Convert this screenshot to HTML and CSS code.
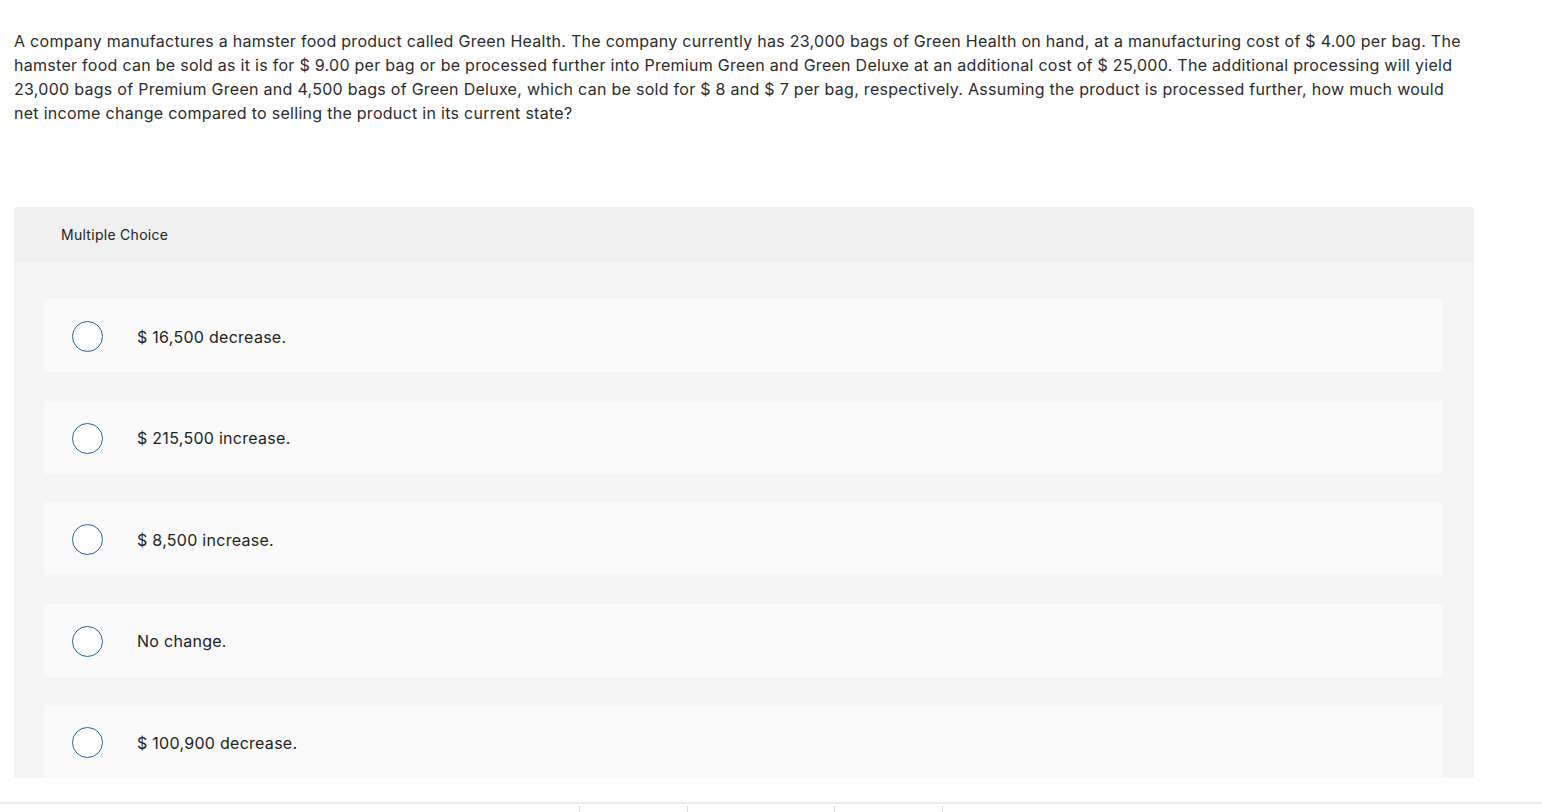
FILE: index.html
```html
<!DOCTYPE html>
<html lang="en">
<head>
<meta charset="utf-8">
<title>Multiple Choice</title>
<link rel="stylesheet" href="styles.css">
</head>
<body>
<div class="page">
  <p class="question">A company manufactures a hamster food product called Green Health. The company currently has 23,000 bags of Green Health on hand, at a manufacturing cost of $ 4.00 per bag. The<br>hamster food can be sold as it is for $ 9.00 per bag or be processed further into Premium Green and Green Deluxe at an additional cost of $ 25,000. The additional processing will yield<br>23,000 bags of Premium Green and 4,500 bags of Green Deluxe, which can be sold for $ 8 and $ 7 per bag, respectively. Assuming the product is processed further, how much would<br>net income change compared to selling the product in its current state?</p>

  <section class="panel">
    <header class="panel-head">Multiple Choice</header>
    <div class="panel-body">
      <label class="option"><span class="radio"></span><span class="opt-text">$ 16,500 decrease.</span></label>
      <label class="option"><span class="radio"></span><span class="opt-text">$ 215,500 increase.</span></label>
      <label class="option"><span class="radio"></span><span class="opt-text">$ 8,500 increase.</span></label>
      <label class="option"><span class="radio"></span><span class="opt-text">No change.</span></label>
      <label class="option"><span class="radio"></span><span class="opt-text">$ 100,900 decrease.</span></label>
    </div>
  </section>
</div>
<footer class="footer">
  <span class="tick t1"></span><span class="tick t2"></span><span class="tick t3"></span><span class="tick t4"></span>
</footer>
</body>
</html>
```

FILE: styles.css
```css
html, body {
  margin: 0;
  padding: 0;
  background: #ffffff;
  height: 812px;
  overflow: hidden;
}
body {
  font-family: "Inter", "Lato", sans-serif;
  color: #2b2b2b;
  letter-spacing: 0.28px;
}
.page {
  padding: 29px 0 0 14px;
  width: 1460px;
  height: 750px;
  overflow: hidden;
}
.question {
  margin: 0;
  font-size: 16px;
  line-height: 24px;
  white-space: nowrap;
}
.panel {
  margin-top: 82px;
  width: 1460px;
  background: #f5f5f5;
  border-radius: 4px 4px 0 0;
}
.panel-head {
  height: 56px;
  background: #f0f0f0;
  border-radius: 4px 4px 0 0;
  display: flex;
  align-items: center;
  padding-left: 47px;
  font-size: 14px;
  color: #222;
  padding-bottom: 1px;
  box-sizing: border-box;
}
.panel-body {
  padding: 36px 31px 0 30px;
  display: flex;
  flex-direction: column;
  gap: 28.5px;
}
.option {
  height: 73px;
  flex: none;
  background: #fafafa;
  border-radius: 3px;
  display: flex;
  align-items: center;
  padding-left: 28px;
}
.radio {
  width: 29px;
  height: 29px;
  border: 1px solid #2d5f91;
  border-radius: 50%;
  background: #fff;
  flex: none;
  margin-top: 2px;
}
.opt-text {
  margin-left: 34px;
  font-size: 16px;
  color: #222;
  margin-top: 2px;
}
.footer {
  position: relative;
  margin-top: 23px;
  border-top: 2px solid #ebebeb;
  height: 9px;
}
.tick {
  position: absolute;
  top: 2px;
  width: 1px;
  height: 6px;
  background: #dcdcdc;
}
.t1 { left: 579px; }
.t2 { left: 687px; }
.t3 { left: 834px; }
.t4 { left: 942px; }
```
